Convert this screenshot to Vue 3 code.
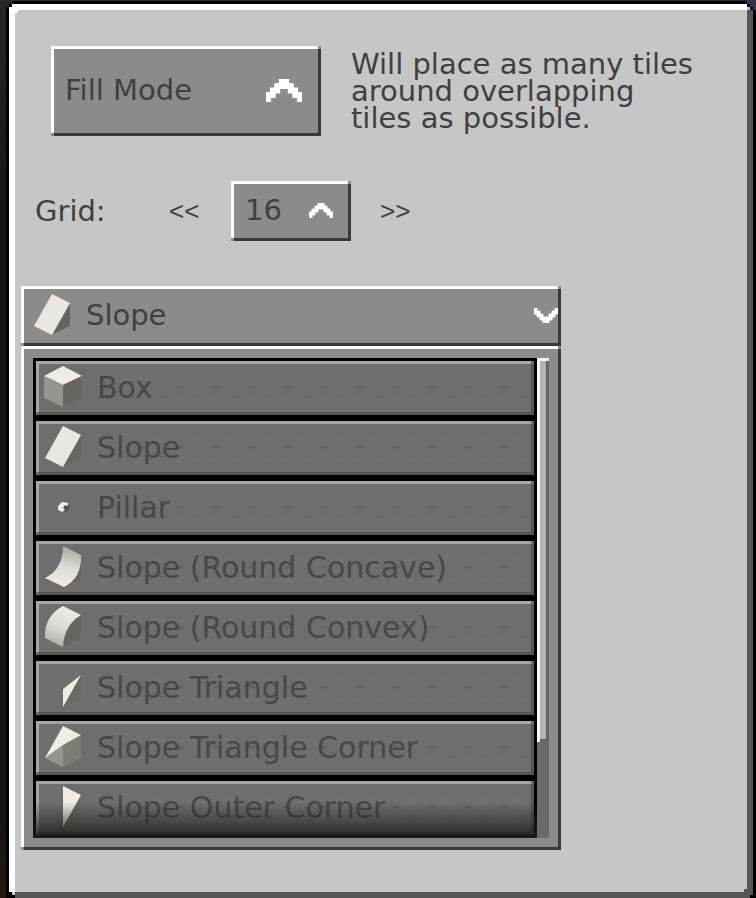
<script setup>
import { ref } from 'vue'

const description = 'Will place as many tiles around overlapping tiles as possible.'
const gridSize = ref(16)
const selected = ref('Slope')

// Faces are polygons on a 38 x 42 canvas, back to front.
const top = '#eeece5'
const left = '#96958d'
const right = '#66655f'
const icons = {
  box: [
    { d: 'M0 10 19 0 38 10 19 19Z', fill: top },
    { d: 'M0 10 19 19V41L0 32Z', fill: left },
    { d: 'M38 10 19 19V41L38 32Z', fill: right },
  ],
  slope: [
    { d: 'M37 10V32L18 41Z', fill: right },
    { d: 'M19 0 37 9 19 41 1 32Z', fill: '#e9e7e0' },
  ],
  pillar: [
    { d: 'M20 19 25 18V24L20 26Z', fill: '#55544f' },
    { d: 'M14 20 18 16 24 17V20L21 19 19 22 21 24 18 26 14 24Z', fill: top },
  ],
  concave: [
    { d: 'M37 10V32L20 41Z', fill: right },
    { d: 'M19 0 37 9Q38 32 20 41L1 32Q19 23 19 0Z', fill: 'url(#concave-face)' },
  ],
  convex: [
    { d: 'M37 9V32L19 41Q20 19 37 9Z', fill: right },
    { d: 'M19 0 37 9Q20 19 19 41L1 32Q0 10 19 0Z', fill: 'url(#convex-face)' },
  ],
  triangle: [
    { d: 'M37 9V32L19 41Z', fill: '#6a6964' },
    { d: 'M37 9 19 23V41Z', fill: top },
  ],
  triangleCorner: [
    { d: 'M1 32 19 19V41Z', fill: left },
    { d: 'M19 19 37 9V32L19 41Z', fill: '#7d7c75' },
    { d: 'M19 0 37 9 19 19 1 32Z', fill: top },
  ],
  outerCorner: [
    { d: 'M37 9V32L19 41Z', fill: '#6a6964' },
    { d: 'M19 0 37 9 19 41Z', fill: top },
  ],
}

const shapes = [
  { name: 'Box', icon: 'box' },
  { name: 'Slope', icon: 'slope' },
  { name: 'Pillar', icon: 'pillar' },
  { name: 'Slope (Round Concave)', icon: 'concave' },
  { name: 'Slope (Round Convex)', icon: 'convex' },
  { name: 'Slope Triangle', icon: 'triangle' },
  { name: 'Slope Triangle Corner', icon: 'triangleCorner' },
  { name: 'Slope Outer Corner', icon: 'outerCorner' },
]
const chevron = 'M3 0H5V1H6V2H7V3H8V5H7V4H6V3H5V2H3V3H2V4H1V5H0V3H1V2H2V1H3Z'

function iconOf(name) {
  return icons[shapes.find((s) => s.name === name).icon]
}
</script>

<template>
  <div class="scene">
    <svg class="defs" aria-hidden="true">
      <linearGradient id="concave-face" x1="0.6" y1="0" x2="0.4" y2="1">
        <stop offset="0" stop-color="#aaa9a3" />
        <stop offset="0.5" stop-color="#dcdad3" />
        <stop offset="1" stop-color="#f0eee7" />
      </linearGradient>
      <linearGradient id="convex-face" x1="0.6" y1="0" x2="0.3" y2="1">
        <stop offset="0" stop-color="#f0eee7" />
        <stop offset="0.5" stop-color="#dcdad3" />
        <stop offset="1" stop-color="#aeada7" />
      </linearGradient>
    </svg>
    <main class="window">
      <section class="mode">
        <button type="button" class="bevel mode-button">
          <span>Fill Mode</span>
          <svg class="chevron large" viewBox="0 0 8 5" aria-hidden="true"><path :d="chevron" /></svg>
        </button>
        <p class="description">{{ description }}</p>
      </section>

      <section class="grid-row">
        <span class="grid-label">Grid:</span>
        <button type="button" class="step" @click="gridSize = Math.max(1, gridSize / 2)">&lt;&lt;</button>
        <button type="button" class="bevel grid-button">
          <span>{{ gridSize }}</span>
          <svg class="chevron" viewBox="0 0 8 5" aria-hidden="true"><path :d="chevron" /></svg>
        </button>
        <button type="button" class="step" @click="gridSize = Math.min(32, gridSize * 2)">&gt;&gt;</button>
      </section>

      <section class="picker">
        <button type="button" class="bevel picker-head" aria-expanded="true">
          <svg class="shape" viewBox="0 0 38 42" aria-hidden="true">
            <path v-for="face in iconOf(selected)" :key="face.d" :d="face.d" :fill="face.fill" />
          </svg>
          <span class="picker-name">{{ selected }}</span>
          <svg class="chevron down" viewBox="0 0 8 5" aria-hidden="true"><path :d="chevron" /></svg>
        </button>
        <div class="bevel picker-body">
          <ul class="shapes">
            <li v-for="shape in shapes" :key="shape.name">
              <button type="button" class="bevel shape-button" @click="selected = shape.name">
                <svg class="shape" viewBox="0 0 38 42" aria-hidden="true">
                  <path v-for="face in icons[shape.icon]" :key="face.d" :d="face.d" :fill="face.fill" />
                </svg>
                <span>{{ shape.name }}</span>
              </button>
            </li>
          </ul>
          <div class="track"><div class="thumb"></div></div>
        </div>
      </section>
    </main>
  </div>
</template>

<style>
body {
  margin: 0;
  background: #111411;
}
</style>

<style scoped>
.scene {
  box-sizing: border-box;
  min-height: 100vh;
  padding: 1px 0 0 6px;
  display: flex;
  background:
    linear-gradient(#33334d, #33334d) right top / 9px 12px no-repeat,
    linear-gradient(#2a2a2a, #2a2a2a) left top / 100% 1px no-repeat,
    linear-gradient(#262826, #111411 25%, #111411 90%, #26160e);
  color: #404040;
  font: 29px/27px "DejaVu Sans", sans-serif;
}
.defs {
  position: absolute;
  width: 0;
  height: 0;
}
.window {
  flex: 1;
  box-sizing: border-box;
  border: 3px solid #000;
  border-bottom: 0;
  padding: 42px 12px 48px 12px;
  clip-path: polygon(6px 0, calc(100% - 9px) 0, calc(100% - 9px) 3px, calc(100% - 6px) 3px, calc(100% - 6px) 6px, calc(100% - 3px) 6px, calc(100% - 3px) 9px, 100% 9px, 100% 100%, 0 100%, 0 6px, 3px 6px, 3px 3px, 6px 3px);
  background:
    linear-gradient(#000, #000) left 0 top 0 / 3px 3px,
    linear-gradient(#fff, #fff) left 6px top 6px / 3px 3px,
    linear-gradient(#000, #000) right 3px top 0 / 3px 3px,
    linear-gradient(#000, #000) right 0 top 0 / 3px 6px,
    linear-gradient(#c6c6c6, #c6c6c6) right 3px top 3px / 3px 3px,
    linear-gradient(#000, #000) left 0 bottom 0 / 3px 6px,
    linear-gradient(#000, #000) left 3px bottom 0 / 3px 3px,
    linear-gradient(#c6c6c6, #c6c6c6) left 3px bottom 3px / 3px 3px,
    linear-gradient(#000, #000) right 0 bottom 0 / 3px 3px,
    linear-gradient(#555, #555) right 6px bottom 6px / 3px 3px,
    linear-gradient(#555, #555) right 0 bottom 0 / 6px calc(100% - 6px),
    linear-gradient(#fff, #fff) left 0 top 0 / 100% 6px,
    linear-gradient(#fff, #fff) left 0 top 0 / 6px calc(100% - 6px),
    linear-gradient(#555, #555) left 0 bottom 0 / 100% 6px,
    #c6c6c6;
  background-repeat: no-repeat;
  background-origin: padding-box;
}
button {
  box-sizing: border-box;
  margin: 0;
  border: 0;
  padding: 0;
  background: none;
  color: inherit;
  font: inherit;
  text-align: left;
  white-space: nowrap;
  cursor: pointer;
}
.bevel {
  --face: #8b8b8b;
  --light: #fff;
  --dark: #393939;
  box-sizing: border-box;
  background:
    linear-gradient(var(--face), var(--face)) right top / 3px 3px no-repeat,
    linear-gradient(var(--face), var(--face)) left bottom / 3px 3px no-repeat,
    linear-gradient(var(--light), var(--light)) left top / 100% 3px no-repeat,
    linear-gradient(var(--dark), var(--dark)) left bottom / 100% 3px no-repeat,
    linear-gradient(var(--light), var(--light)) left top / 3px 100% no-repeat,
    linear-gradient(var(--dark), var(--dark)) right top / 3px 100% no-repeat,
    var(--face);
}
.chevron {
  display: block;
  flex: none;
  width: 24px;
  height: 15px;
  fill: #fff;
  stroke: #fff;
  stroke-width: 0.3;
}
.chevron.large {
  width: 36px;
  height: 23px;
}
.chevron.down {
  transform: scaleY(-1);
}
.mode {
  display: flex;
  align-items: center;
  gap: 30px;
  padding-left: 30px;
}
.mode-button {
  flex: none;
  width: 270px;
  height: 90px;
  padding: 0 19px 2px 14px;
  display: flex;
  align-items: center;
  justify-content: space-between;
}
.description {
  margin: 0;
  max-width: 348px;
}
.grid-row {
  display: flex;
  align-items: center;
  margin-top: 45px;
  padding-left: 14px;
}
.grid-label {
  width: 134px;
}
.grid-button {
  width: 120px;
  height: 60px;
  margin: 0 29px 0 32px;
  padding: 0 18px 2px 14px;
  display: flex;
  align-items: center;
  justify-content: space-between;
}
.step {
  width: 30px;
  font-family: "Liberation Sans", sans-serif;
  font-size: 26px;
}
.picker {
  max-width: 540px;
  margin-top: 45px;
}
.picker-head {
  width: 100%;
  height: 60px;
  padding: 0 3px 2px 12px;
  display: flex;
  align-items: center;
}
.picker-name {
  flex: 1;
  padding-left: 15px;
}
.shape {
  display: block;
  flex: none;
  width: 38px;
  height: 42px;
}
.picker-body {
  display: flex;
  padding: 12px;
}
.shapes {
  position: relative;
  flex: 1;
  margin: 0;
  padding: 0;
  list-style: none;
  background: #000;
}
.shapes::after {
  content: "";
  position: absolute;
  inset: auto 0 0 0;
  z-index: 2;
  height: 36px;
  background: linear-gradient(rgba(30, 30, 30, 0), rgba(30, 30, 30, 0.9));
  pointer-events: none;
}
.shapes li {
  padding: 3px;
}
.shape-button {
  --face: #6e6e6e;
  --light: #a6a6a6;
  --dark: #555;
  position: relative;
  width: 100%;
  height: 54px;
  padding: 0 6px 2px 8px;
  display: flex;
  align-items: center;
  gap: 15px;
  color: #484848;
  font-size: 30px;
}
.shape-button::after {
  content: "";
  position: absolute;
  inset: 6px 6px 6px 60px;
  background:
    radial-gradient(5px 2px at 12px 20px, #626262 40%, transparent) 0 0 / 36px 48px,
    radial-gradient(4px 2px at 30px 30px, #686868 40%, transparent) 0 0 / 36px 48px,
    radial-gradient(8px 4px at 26px 14px, #717171 40%, transparent) 0 0 / 36px 48px,
    radial-gradient(8px 4px at 10px 34px, #717171 40%, transparent) 0 0 / 36px 48px;
}
.shape-button > * {
  position: relative;
  z-index: 1;
}
.track {
  width: 12px;
  background: #6a6a6a;
}
.thumb {
  box-sizing: border-box;
  height: 80%;
  background:
    linear-gradient(#f4f4f4, #f4f4f4) left top / 100% 3px no-repeat,
    linear-gradient(#f4f4f4, #f4f4f4) left top / 3px 100% no-repeat,
    linear-gradient(#666, #666) right top / 3px 100% no-repeat,
    linear-gradient(#666, #666) left bottom / 100% 3px no-repeat,
    #b3b3b3;
}
</style>
